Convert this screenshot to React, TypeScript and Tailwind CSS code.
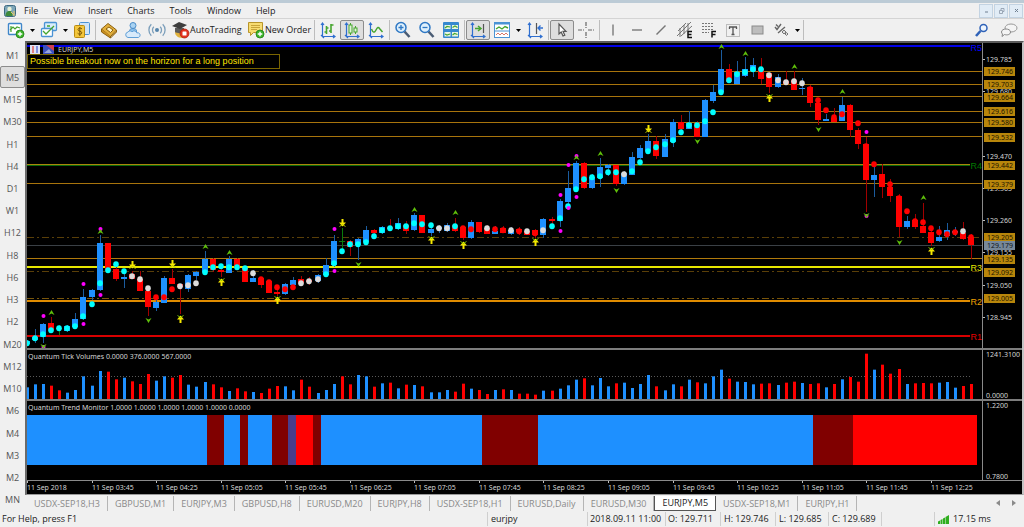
import React from 'react';

const BLUE = '#1e90ff';
const RED = '#ff0000';
const MAROON = '#800000';

// horizontal step between two bars
const STEP = 8.07;
const barX = (index: number) => Math.round(index * STEP);

const dotColors: Record<string, string> = { c: '#00ffff', w: '#dcdcdc', r: '#ff0000' };

type Candle = [color: 'b' | 'r' | 'g', top: number, bottom: number, high: number, low: number, dot: string, dotY: number];

const candles: Candle[] = [
  ['b', 341, 344, 340, 345, 'c', 343],
  ['b', 337, 340, 329, 343, 'c', 338],
  ['b', 324, 337, 323, 343, 'c', 334],
  ['r', 323, 330, 317, 331, 'c', 330],
  ['g', 328, 328, 325, 335, 'c', 328],
  ['b', 326, 331, 325, 332, 'c', 328],
  ['b', 319, 327, 313, 328, 'c', 326],
  ['b', 297, 319, 289, 320, 'c', 316],
  ['b', 290, 297, 289, 300, 'c', 304],
  ['b', 243, 290, 235, 291, 'c', 283],
  ['r', 243, 270, 243, 272, 'c', 270],
  ['r', 269, 279, 266, 281, 'c', 264],
  ['b', 277, 279, 273, 288, 'c', 271],
  ['r', 274, 279, 271, 279, 'w', 276],
  ['r', 279, 291, 271, 291, 'w', 279],
  ['r', 291, 307, 290, 316, 'w', 288],
  ['b', 302, 308, 300, 311, 'r', 297],
  ['b', 278, 303, 276, 303, 'r', 297],
  ['r', 278, 284, 269, 284, 'r', 289],
  ['r', 284, 287, 284, 314, 'w', 286],
  ['b', 275, 289, 274, 292, 'w', 285],
  ['b', 272, 276, 271, 280, 'w', 283],
  ['b', 259, 272, 251, 273, 'c', 272],
  ['r', 259, 270, 258, 272, 'c', 267],
  ['r', 270, 272, 268, 277, 'c', 266],
  ['b', 259, 273, 256, 273, 'c', 267],
  ['r', 259, 268, 258, 270, 'c', 267],
  ['r', 268, 282, 267, 282, 'c', 268],
  ['b', 278, 282, 270, 282, 'w', 273],
  ['r', 278, 285, 277, 288, 'r', 279],
  ['r', 281, 293, 280, 293, 'r', 282],
  ['r', 292, 294, 285, 296, 'r', 287],
  ['b', 284, 294, 283, 295, 'r', 289],
  ['b', 280, 285, 277, 286, 'r', 287],
  ['r', 279, 283, 276, 286, 'w', 283],
  ['r', 280, 282, 277, 285, 'w', 281],
  ['b', 275, 281, 274, 283, 'w', 279],
  ['b', 265, 275, 258, 276, 'c', 274],
  ['b', 241, 265, 235, 267, 'c', 263],
  ['g', 241, 241, 228, 252, 'c', 251],
  ['r', 241, 247, 240, 256, 'c', 244],
  ['b', 239, 245, 238, 260, 'c', 244],
  ['b', 230, 242, 226, 243, 'c', 242],
  ['r', 230, 233, 229, 237, 'c', 236],
  ['b', 227, 233, 226, 234, 'c', 230],
  ['r', 227, 229, 219, 230, 'c', 228],
  ['b', 223, 229, 218, 230, 'c', 226],
  ['r', 225, 231, 221, 234, 'c', 226],
  ['b', 215, 230, 213, 231, 'c', 223],
  ['r', 215, 233, 215, 233, 'c', 224],
  ['b', 229, 233, 227, 236, 'c', 225],
  ['b', 227, 229, 225, 233, 'w', 228],
  ['b', 225, 231, 223, 232, 'w', 228],
  ['r', 225, 231, 218, 232, 'c', 226],
  ['r', 227, 238, 226, 240, 'r', 228],
  ['b', 222, 238, 220, 239, 'r', 229],
  ['r', 222, 232, 222, 233, 'r', 225],
  ['r', 228, 234, 225, 234, 'w', 228],
  ['b', 231, 234, 226, 234, 'r', 229],
  ['r', 228, 233, 226, 233, 'r', 230],
  ['b', 230, 234, 227, 235, 'w', 230],
  ['r', 229, 232, 227, 235, 'r', 231],
  ['r', 231, 235, 229, 235, 'w', 231],
  ['r', 230, 235, 229, 238, 'r', 233],
  ['b', 219, 235, 218, 238, 'w', 230],
  ['r', 219, 221, 217, 226, 'c', 226],
  ['b', 201, 221, 199, 227, 'c', 218],
  ['b', 188, 202, 171, 206, 'c', 206],
  ['b', 163, 189, 161, 190, 'c', 189],
  ['r', 163, 188, 162, 189, 'c', 179],
  ['b', 177, 188, 174, 189, 'c', 177],
  ['b', 167, 178, 158, 187, 'c', 176],
  ['b', 165, 168, 164, 176, 'c', 172],
  ['r', 165, 184, 165, 186, 'c', 172],
  ['b', 173, 184, 171, 185, 'w', 174],
  ['b', 157, 175, 152, 175, 'c', 171],
  ['b', 148, 158, 145, 159, 'c', 162],
  ['b', 141, 151, 134, 152, 'c', 151],
  ['r', 141, 156, 136, 159, 'c', 147],
  ['b', 139, 157, 134, 157, 'c', 144],
  ['b', 122, 142, 119, 147, 'c', 140],
  ['r', 122, 129, 115, 130, 'c', 132],
  ['b', 123, 129, 111, 129, 'c', 125],
  ['r', 123, 137, 121, 137, 'c', 125],
  ['b', 100, 137, 99, 137, 'c', 121],
  ['b', 92, 101, 85, 103, 'c', 112],
  ['b', 69, 92, 50, 94, 'c', 92],
  ['r', 69, 82, 64, 82, 'c', 80],
  ['b', 72, 84, 61, 84, 'c', 74],
  ['b', 69, 76, 57, 77, 'c', 72],
  ['b', 65, 71, 58, 77, 'c', 69],
  ['r', 68, 79, 58, 84, 'c', 69],
  ['r', 73, 87, 72, 93, 'w', 75],
  ['b', 77, 87, 74, 88, 'w', 80],
  ['r', 81, 84, 71, 84, 'w', 82],
  ['r', 80, 90, 71, 90, 'w', 81],
  ['b', 88, 89, 78, 95, 'w', 83],
  ['r', 87, 103, 85, 107, 'r', 89],
  ['r', 103, 120, 101, 125, 'r', 100],
  ['b', 119, 121, 114, 121, 'r', 110],
  ['r', 118, 122, 108, 122, 'r', 117],
  ['b', 105, 121, 97, 121, 'r', 114],
  ['r', 105, 130, 104, 137, 'r', 112],
  ['r', 130, 144, 128, 149, 'r', 123],
  ['r', 144, 180, 137, 212, 'r', 146],
  ['b', 175, 180, 165, 197, 'r', 164],
  ['r', 174, 187, 164, 198, 'r', 177],
  ['r', 187, 196, 179, 202, 'r', 184],
  ['r', 196, 227, 194, 237, 'r', 198],
  ['b', 221, 227, 216, 229, 'r', 211],
  ['r', 220, 227, 214, 229, 'r', 221],
  ['r', 226, 233, 203, 233, 'r', 222],
  ['r', 232, 243, 231, 246, 'r', 228],
  ['b', 237, 241, 226, 242, 'r', 232],
  ['b', 230, 236, 223, 240, 'r', 234],
  ['b', 231, 233, 227, 236, 'r', 232],
  ['r', 233, 239, 222, 240, 'w', 231],
  ['r', 237, 245, 234, 259, 'r', 237],
];

const fractalsUp = [[3, 313], [9, 232], [22, 247], [25, 253], [48, 210], [53, 213], [68, 158], [71, 154], [86, 47], [89, 54], [95, 67], [101, 92], [111, 198]];
const fractalsDown = [[2, 346], [15, 320], [41, 264], [73, 190], [83, 141], [98, 129], [104, 215], [108, 242]];
const arrowsUp = [[19, 319], [24, 282], [31, 300], [50, 240], [54, 245], [63, 242], [92, 98], [112, 251]];
const arrowsDown = [[13, 265], [18, 264], [39, 223], [77, 129]];
const magentaDots = [[2, 316], [2, 347], [7, 284], [7, 324], [9, 229], [9, 295], [38, 229], [38, 271], [66, 195], [66, 231], [67, 165], [67, 208], [68, 156], [68, 197], [104, 132], [104, 216]];

const levels = [
  { y: 71, color: '#a8740c', width: 1 },
  { y: 84, color: '#a8740c', width: 1 },
  { y: 96, color: '#a8740c', width: 1 },
  { y: 111, color: '#a8740c', width: 1 },
  { y: 122, color: '#a8740c', width: 1 },
  { y: 136, color: '#a8740c', width: 1 },
  { y: 165, color: '#0a6a0a', width: 1 },
  { y: 164, color: '#a8860c', width: 1 },
  { y: 183, color: '#a8740c', width: 1 },
  { y: 258, color: '#b07a0c', width: 1 },
  { y: 245, color: '#3a4046', width: 1 },
  { y: 237, color: '#5a3f08', width: 1, dash: '7 3 2 3' },
  { y: 271, color: '#5a3f08', width: 1, dash: '7 3 2 3' },
  { y: 298, color: '#7a560a', width: 1, dash: '7 3 2 3' },
  { y: 267, color: '#e6e600', width: 2 },
  { y: 301, color: '#e08c00', width: 2 },
  { y: 336, color: '#d80000', width: 2 },
  { y: 46, color: '#0000e6', width: 2 },
];

const pivots = [
  { name: 'R5', y: 47, color: '#0000ff' },
  { name: 'R4', y: 165, color: '#007800' },
  { name: 'R3', y: 267, color: '#e6e600' },
  { name: 'R2', y: 301, color: '#f0a000' },
  { name: 'R1', y: 336, color: '#e60000' },
];

const scale = [
  ['129.785', 59], ['129.680', 91], ['129.470', 156], ['129.365', 188],
  ['129.260', 220], ['129.155', 252], ['129.050', 285], ['128.945', 317],
] as const;

const priceTags = [
  ['129.746', 71], ['129.703', 84], ['129.664', 97], ['129.616', 111], ['129.580', 122], ['129.532', 137],
  ['129.442', 165], ['129.379', 184], ['129.205', 237], ['129.135', 259], ['129.092', 272], ['129.005', 298],
] as const;

// bar heights in thirds of a pixel, with one letter of colour for each bar
const volumeHeights = [
  35, 44, 45, 40, 26, 19, 27, 68, 40, 84, 82, 59, 64, 53, 45, 75, 55, 68, 64, 72, 43, 37, 51, 44, 35, 24, 32, 23, 21, 18,
  31, 39, 38, 26, 58, 37, 18, 27, 45, 68, 44, 72, 68, 37, 47, 49, 32, 43, 42, 38, 20, 20, 27, 22, 46, 31, 27, 15, 27, 29,
  27, 16, 16, 13, 25, 25, 31, 41, 58, 62, 41, 63, 38, 47, 49, 33, 45, 72, 38, 26, 44, 38, 58, 50, 47, 68, 88, 61, 52, 51,
  44, 46, 47, 42, 49, 52, 48, 45, 47, 35, 45, 59, 66, 52, 136, 88, 103, 76, 90, 45, 47, 48, 47, 49, 51, 34, 39, 45,
];
const volumeColors =
  'bbbrrbbbbbrrbrrrbbrrbbbrrbrrbrrrbbrrbbbrrbbrbrbrbrbbbrrbrrbrbrrrbrbbbrbbbrbbbbrbbrbrbbbrbbbrrbrrbrrbrbrrrbrrrbrrrbbbrr';

const trend = [
  [0, 180, BLUE], [180, 197, MAROON], [197, 213, BLUE], [213, 221, MAROON], [221, 245, BLUE], [245, 261, MAROON],
  [261, 269, '#483d8b'], [269, 286, RED], [286, 294, MAROON], [294, 455, BLUE], [455, 511, MAROON], [511, 786, BLUE],
  [786, 826, MAROON], [826, 950, RED],
] as const;

const times = [
  '11 Sep 2018', '11 Sep 03:45', '11 Sep 04:25', '11 Sep 05:05', '11 Sep 05:45', '11 Sep 06:25', '11 Sep 07:05', '11 Sep 07:45',
  '11 Sep 08:25', '11 Sep 09:05', '11 Sep 09:45', '11 Sep 10:25', '11 Sep 11:05', '11 Sep 11:45', '11 Sep 12:25',
];

const timeframes = [
  'M1', 'M5', 'M15', 'M30', 'H1', 'H4', 'D1', 'W1', 'H12', 'H8', 'H6', 'H3', 'H2', 'M20', 'M12', 'M10', 'M6', 'M4', 'M3', 'M2', 'MN',
];

const tabs = [
  'USDX-SEP18,H3', 'GBPUSD,M1', 'EURJPY,M3', 'GBPUSD,H8', 'EURUSD,M20', 'EURJPY,H8', 'USDX-SEP18,H1', 'EURUSD,Daily',
  'EURUSD,M30', 'EURJPY,M5', 'USDX-SEP18,M1', 'EURJPY,H1',
];

const Icon = ({ children }: { children: React.ReactNode }) => (
  <svg width="18" height="18" viewBox="0 0 18 18" fill="none" className="shrink-0">
    {children}
  </svg>
);

const Axes = () => (
  <path d="M3.5 2v13.5H16M2 4l1.5-2L5 4M2 14l3 3M14 14l2 1.5-2 1.5" stroke="#2f6fd0" strokeWidth="1.2" />
);

const Plus = () => (
  <>
    <circle cx="13" cy="13" r="4" fill="#3cb52a" stroke="#1f7d14" strokeWidth="0.8" />
    <path d="M13 10.7v4.6M10.7 13h4.6" stroke="#fff" strokeWidth="1.4" />
  </>
);

const ToolButton = ({ label, active, children }: { label: string; active?: boolean; children: React.ReactNode }) => (
  <button
    aria-label={label}
    className={`flex h-5 w-6 shrink-0 items-center justify-center rounded-xs border ${
      active ? 'border-[#8c8c8c] bg-[#dedede]' : 'border-transparent'
    }`}
  >
    <Icon>{children}</Icon>
  </button>
);

const Caret = () => (
  <button aria-label="More" className="flex h-5 w-[9px] shrink-0 items-center justify-center">
    <svg width="5" height="3" viewBox="0 0 5 3"><path d="M0 0h5L2.5 3z" fill="#000" /></svg>
  </button>
);

const Divider = () => <span className="mx-px h-5 w-px shrink-0 bg-[#bdbdbd]" />;

const Menu = () => (
  <header className="flex h-[15px] items-center bg-[#f0f0f0] pl-1">
    <svg width="12" height="12" viewBox="0 0 12 12" className="mr-2">
      <rect x="0.5" y="0.5" width="11" height="11" rx="2" fill="#7ea6b8" stroke="#3c6a80" />
      <circle cx="5.5" cy="4" r="2.2" fill="#e8f2d8" />
      <path d="M1.5 11c0-4 2-5 4-5s3 1 3 5z" fill="#3f8a3a" />
      <path d="M7 7l3 3M10 6v5" stroke="#e9c96a" />
    </svg>
    <nav className="flex gap-[15px] text-[9px] text-[#222]">
      {['File', 'View', 'Insert', 'Charts', 'Tools', 'Window', 'Help'].map((item) => (
        <button key={item}>{item}</button>
      ))}
    </nav>
    <div className="ml-auto flex gap-px pr-px">
      <button aria-label="Minimize" className="flex h-[14px] w-[14px] items-center justify-center border border-[#c3d3e2] bg-[#e1ecf6]">
        <svg width="7" height="7"><path d="M2 5h3" stroke="#6f7f90" /></svg>
      </button>
      <button aria-label="Restore" className="flex h-[14px] w-[14px] items-center justify-center border border-[#c3d3e2] bg-[#e1ecf6]">
        <svg width="7" height="7" fill="none"><path d="M1.5 3.5h3v3h-3zM3 3V1.5h3v3H5" stroke="#8a98a8" strokeWidth="0.8" /></svg>
      </button>
      <button aria-label="Close" className="flex h-[14px] w-[14px] items-center justify-center border border-[#c3d3e2] bg-[#e1ecf6]">
        <svg width="7" height="7"><path d="M2 2l3 3M5 2L2 5" stroke="#6f7f90" /></svg>
      </button>
    </div>
  </header>
);

const Toolbar = () => (
  <div className="flex h-[23px] items-center border-t border-[#d4d4d4] bg-[#f0f0f0] pl-1 text-[9px] text-[#222]">
    <ToolButton label="New Chart">
      <rect x="1.5" y="2.5" width="13" height="11" rx="1" fill="#fff" stroke="#3f86c9" strokeWidth="1.4" />
      <path d="M4 11V5M3 9l3-3 2 2 2-2 3 1" stroke="#46a52f" strokeWidth="1.2" />
      <Plus />
    </ToolButton>
    <Caret />
    <ToolButton label="Profiles">
      <rect x="4.5" y="1.5" width="12" height="8" rx="1" fill="#d9ecfa" stroke="#4a93d4" strokeWidth="1.3" />
      <rect x="1.5" y="7.5" width="11" height="8" rx="1" fill="#fff" stroke="#4a93d4" strokeWidth="1.3" />
      <path d="M3 10l3 3 6-6 2-2M7 5h3" stroke="#46a52f" strokeWidth="1.3" />
    </ToolButton>
    <Caret />
    <ToolButton label="Market Watch">
      <rect x="6.5" y="1.5" width="10" height="12" rx="1" fill="#cfe4f7" stroke="#4a93d4" />
      <rect x="1.5" y="4.5" width="10" height="12" rx="1" fill="#f3c63c" stroke="#b98a12" />
      <path d="M9 8c-1-1.5-4-1.200-4 .6 0 2 3.800 1.200 3.800 3.200 0 1.700-3 2-4.200.4M6.800 6v9" stroke="#7b5605" />
    </ToolButton>
    <Divider />
    <ToolButton label="Data Window">
      <path d="M1.5 8L8 2.5 16.5 9l-6 6.5z" fill="#e2ae3a" stroke="#8b6110" />
      <path d="M1.5 8v3l9 6v-2M10.5 17l6-6V9" fill="#c98f20" stroke="#8b6110" />
      <path d="M6 8l3-2 4 3-2.5 2.5z" fill="#fff3c4" stroke="#8b6110" />
    </ToolButton>
    <ToolButton label="Cloud">
      <circle cx="9" cy="4.5" r="3" fill="#a8d2f2" stroke="#4a8cc8" />
      <path d="M5.500 12V9.500c0-2.500 7-2.500 7 0V12z" fill="#8fc4ee" stroke="#4a8cc8" />
      <path d="M4 16.5a2.800 2.800 0 010-5.500c1-1.500 3-1.500 4-.2 1.500-1.600 4.500-1 4.800 1 2.500-.4 3.700 1.500 3.200 3-.3 1-1 1.700-2 1.700z" fill="#d8eafa" stroke="#5e9ed6" />
    </ToolButton>
    <ToolButton label="Signals">
      <circle cx="9" cy="9" r="2" fill="#5585ac" />
      <path d="M5.800 12.200a4.500 4.500 0 010-6.400M12.200 5.800a4.500 4.500 0 010 6.400M3.300 14.700a8 8 0 010-11.400M14.700 3.300a8 8 0 010 11.400" stroke="#7c9fbb" strokeWidth="1.3" />
    </ToolButton>
    <button className="flex w-[75px] shrink-0 items-center pl-[3px] whitespace-nowrap">
      <Icon>
        <path d="M3 11c0 5 5 6 8 6l1-7z" fill="#e0b23c" />
        <path d="M3 7v4c2 1.5 7 1.5 9 0V7z" fill="#5b5b5b" />
        <path d="M0 5l7-4 8 3-7 4z" fill="#3e3e3e" />
        <circle cx="12.5" cy="12.5" r="4.5" fill="#e2311d" stroke="#a81c0c" strokeWidth="0.7" />
        <rect x="10.5" y="10.5" width="4" height="4" rx="0.5" fill="#fff" />
      </Icon>
      AutoTrading
    </button>
    <button className="flex w-[69px] shrink-0 items-center pl-[3px] whitespace-nowrap">
      <Icon>
        <path d="M1.5 1.5h14v10h-9l-3 3v-3h-2z" fill="#f7dc72" stroke="#b8952a" />
        <path d="M4 4.5h9M4 6.5h9M4 8.5h6" stroke="#c9a53a" />
        <Plus />
      </Icon>
      New Order
    </button>
    <Divider />
    <ToolButton label="Bar Chart">
      <Axes />
      <path d="M7.500 5v8M5.500 11h2M7.500 7h2M12 3v9M12 4h2.500M10 10h2" stroke="#46a52f" strokeWidth="1.6" />
    </ToolButton>
    <ToolButton label="Candlesticks" active>
      <Axes />
      <path d="M7.500 2v12M12.500 5v8" stroke="#46a52f" />
      <rect x="6" y="4" width="3" height="8" fill="#dff5d8" stroke="#46a52f" />
      <rect x="11" y="7" width="3" height="4" fill="#dff5d8" stroke="#46a52f" />
    </ToolButton>
    <ToolButton label="Line Chart">
      <Axes />
      <path d="M4.500 8c1.500 4 3 4 4.500 1s2.500-3 3.500-1.500L15.500 11" stroke="#46a52f" strokeWidth="1.5" />
    </ToolButton>
    <Divider />
    <ToolButton label="Zoom In">
      <path d="M10.5 10.5l5 5.5" stroke="#4a5c74" strokeWidth="2.6" />
      <circle cx="7" cy="6.5" r="5" fill="#dff0fc" stroke="#2f78c4" strokeWidth="1.5" />
      <path d="M7 4v5M4.500 6.500h5" stroke="#2f78c4" strokeWidth="1.3" />
    </ToolButton>
    <ToolButton label="Zoom Out">
      <path d="M10.5 10.5l5 5.5" stroke="#4a5c74" strokeWidth="2.6" />
      <circle cx="7" cy="6.5" r="5" fill="#dff0fc" stroke="#2f78c4" strokeWidth="1.5" />
      <path d="M4.500 6.500h5" stroke="#2f78c4" strokeWidth="1.3" />
    </ToolButton>
    <ToolButton label="Tile Windows">
      <rect x="1" y="1" width="16" height="16" rx="1" fill="#3588cf" />
      <path d="M2.500 4h6v4h-6zM10 4h6v4h-6zM2.500 11h6v4.500h-6zM10 11h6v4.500h-6z" fill="#e8f6e2" />
      <path d="M3 7l2-1.500 3 .5M10.500 6.500L13 5l2.500 1.500M3 13l2 1 3-1M10.500 14l2-1.500 3 1" stroke="#46a52f" strokeWidth="1.2" />
    </ToolButton>
    <Divider />
    <ToolButton label="Chart Shift" active>
      <Axes />
      <path d="M14.500 3v9" stroke="#555" strokeWidth="1.2" />
      <path d="M6 7.500h5M9 5l3 2.500L9 10" stroke="#46a52f" strokeWidth="1.5" />
    </ToolButton>
    <ToolButton label="Indicators">
      <rect x="1.5" y="1.5" width="15" height="15" fill="#fff" stroke="#4a93d4" />
      <path d="M1 2.500h16" stroke="#4a93d4" strokeWidth="2" />
      <path d="M3 8l3-2 3 2 3-2.500 3 1.500" stroke="#46a52f" strokeWidth="1.4" />
      <path d="M2 10h14" stroke="#4a93d4" />
      <path d="M3 14l2-2 2 2 2-2 2 2 2-2 2 2" stroke="#d8786a" />
    </ToolButton>
    <Caret />
    <ToolButton label="Auto Scroll">
      <Axes />
      <path d="M10.500 2v11" stroke="#555" strokeWidth="1.2" />
      <path d="M12 7h5M14.500 4.500L12 7l2.500 2.500" stroke="#2f6fd0" strokeWidth="1.4" />
    </ToolButton>
    <Divider />
    <ToolButton label="Cursor" active>
      <path d="M6 3v10l2.200-2 1.800 4 1.800-.8L10 10.300h3z" fill="#fff" stroke="#555" strokeWidth="1.2" />
    </ToolButton>
    <ToolButton label="Crosshair">
      <path d="M9 1v6M9 11v6M1 9h6M11 9h6" stroke="#666" strokeWidth="1.2" strokeDasharray="4 1" />
    </ToolButton>
    <Divider />
    <ToolButton label="Vertical Line"><path d="M9 3.500v11" stroke="#666" strokeWidth="1.2" /></ToolButton>
    <ToolButton label="Horizontal Line"><path d="M4 9h10" stroke="#666" strokeWidth="1.2" /></ToolButton>
    <ToolButton label="Trendline"><path d="M4.500 13.500l9-9" stroke="#777" strokeWidth="1.4" /></ToolButton>
    <ToolButton label="Equidistant Channel">
      <path d="M1 15L15 1M2 10l8-8M5 15L16 5M4 7v9M8 4v9M12 2v8" stroke="#777" />
      <path d="M16 10.500h-4v6h4M12 13.500h3.500" stroke="#111" strokeWidth="1.5" />
    </ToolButton>
    <ToolButton label="Fibonacci">
      <path d="M2 2.500h12M2 5.500h12M2 8.500h12M2 11.500h7" stroke="#777" strokeDasharray="2 1" />
      <path d="M16 10.500h-4v6M12 13.500h3.500" stroke="#111" strokeWidth="1.5" />
    </ToolButton>
    <ToolButton label="Text">
      <rect x="2.5" y="3.5" width="13" height="12" stroke="#888" strokeDasharray="1 1" />
      <path d="M5 6h8M9 6v8M7.500 13.500h3M5.500 6v2M12.500 6v2" stroke="#555" strokeWidth="1.3" />
    </ToolButton>
    <ToolButton label="Rectangle"><rect x="4" y="5" width="11" height="8" fill="#bdbdbd" stroke="#8a8a8a" /></ToolButton>
    <ToolButton label="Arrows">
      <path d="M3 6l2 2.500L9 3M6 12L13 6M4 3.500L6 5.500" stroke="#666" strokeWidth="1.4" />
      <path d="M10 11l2-2 2 2-2 2zM13 13l1.500-1.500L16 13l-1.500 1.500z" fill="#ddd" stroke="#777" />
    </ToolButton>
    <Caret />
    <Divider />
    <div className="ml-auto flex gap-[3px] pr-[3px]">
      <ToolButton label="Search">
        <path d="M3 15l4.500-5" stroke="#2f62b8" strokeWidth="2.6" />
        <circle cx="10.5" cy="7" r="3.5" fill="#eef5fd" stroke="#2f62b8" strokeWidth="1.5" />
      </ToolButton>
      <ToolButton label="Chat">
        <ellipse cx="11" cy="7" rx="6" ry="4" fill="#f4f4f4" stroke="#999" />
        <path d="M1.500 11c0-4 9-4 9 0 0 3-4 3.300-6 2.500L2 15.500l.5-2.500c-.6-.5-1-1.200-1-2z" fill="#f4f4f4" stroke="#888" />
      </ToolButton>
    </div>
  </div>
);

const PricePanel = () => (
  <section className="flex min-h-[307px] flex-1 border-b-2 border-[#7d7d7d]">
    <div className="relative min-w-0 flex-1">
      <svg className="h-full w-full" role="img" aria-label="EURJPY M5 price chart">
        <g transform="translate(0 -43)">
          {levels.map((l) => (
            <line
              key={l.y}
              x1="0"
              x2="100%"
              y1={l.width === 2 ? l.y : l.y + 0.5}
              y2={l.width === 2 ? l.y : l.y + 0.5}
              stroke={l.color}
              strokeWidth={l.width}
              strokeDasharray={l.dash}
            />
          ))}
          {candles.map(([color, top, bottom, high, low], i) => {
            const stroke = color === 'b' ? '#1b5c9e' : color === 'r' ? '#a00000' : '#0a7a0a';
            const fill = color === 'b' ? BLUE : color === 'r' ? RED : '#0a7a0a';
            return (
              <g key={i}>
                <line x1={barX(i) + 0.5} x2={barX(i) + 0.5} y1={high} y2={low} stroke={stroke} />
                <rect x={barX(i) - 3} y={top} width="6" height={Math.max(bottom - top, 1)} fill={fill} />
              </g>
            );
          })}
          {candles.map(([, , , , , dot, y], i) => (
            <ellipse key={i} cx={barX(i)} cy={y + 0.3} rx="2.8" ry="3" fill={dotColors[dot]} />
          ))}
          {magentaDots.map(([i, y]) => (
            <circle key={`${i}-${y}`} cx={barX(i) + 0.5} cy={y} r="2" fill="#ff00ff" />
          ))}
          {fractalsUp.map(([i, y]) => (
            <path key={i} d="M0-3L3 2 0 .5-3 2z" fill="#5fbf0a" transform={`translate(${barX(i) + 0.5} ${y})`} />
          ))}
          {fractalsDown.map(([i, y]) => (
            <path key={i} d="M0 3L3-2 0-.5-3-2z" fill="#5fbf0a" transform={`translate(${barX(i) + 0.5} ${y})`} />
          ))}
          {arrowsUp.map(([i, y]) => (
            <g key={i} transform={`translate(${barX(i) + 0.5} ${y})`}>
              <path d="M0-3.500L3.500.5H1V4H-1V.5H-3.500z" fill="#f5e800" />
              <path d="M-3-3.500L0-1.500 3-3.500" stroke="#7fc400" fill="none" />
            </g>
          ))}
          {arrowsDown.map(([i, y]) => (
            <g key={i} transform={`translate(${barX(i) + 0.5} ${y})`}>
              <path d="M0 3.500L3.500-.5H1V-4H-1V-.5H-3.500z" fill="#f5e800" />
              <path d="M-3 3.500L0 1.500 3 3.500" stroke="#b8c400" fill="none" />
            </g>
          ))}
          {pivots.map((p) => (
            <g key={p.name}>
              {/* the line stops short of its label */}
              <rect x="100%" y={p.y - 3} width="12" height="6" fill="#000" transform="translate(-12 0)" />
              <text x="100%" y={p.y + 4} textAnchor="end" fill={p.color} className="font-['Liberation_Sans'] text-[9px]">
                {p.name}
              </text>
            </g>
          ))}
        </g>
      </svg>
      {/* chart caption and note box */}
      <div className="absolute top-[2px] left-0 font-['Liberation_Sans']">
        <div className="flex h-[9px] items-center gap-1 pl-[3px] font-['Noto_Sans'] text-[7px] leading-none text-[#d0d0d0]">
          <svg width="24" height="9" viewBox="0 0 24 9">
            <rect width="10" height="9" fill="#dfe3f5" />
            <path d="M3 1v7" stroke="#e08080" strokeWidth="2" />
            <path d="M7 1v7" stroke="#8090e0" strokeWidth="2" />
            <rect x="13" width="11" height="9" fill="#3a4fc0" />
            <path d="M16 0h8v6l-4-3z" fill="#d04050" />
            <path d="M14 8l5-4 3 4z" fill="#99a6d8" />
          </svg>
          EURJPY,M5
        </div>
        <div className="h-[15px] w-[253px] border border-[#7a6500] bg-black pl-[2px] text-[9px] leading-[13px] whitespace-nowrap text-[#ffe600]">
          Possible breakout now on the horizon for a long position
        </div>
      </div>
    </div>
    <svg className="h-full w-10 shrink-0 border-l border-[#8a8a8a] font-['Noto_Sans'] text-[7px]">
      <g transform="translate(0 -43)">
        {scale.map(([label, y]) => (
          <g key={label}>
            <path d={`M0 ${y + 0.5}h2`} stroke="#bdbdbd" />
            <text x="3" y={y + 3} fill="#d4d4d4">{label}</text>
          </g>
        ))}
        {priceTags.map(([label, y]) => (
          <g key={label}>
            <rect x="1" y={y - 4} width="31" height="9" fill="#b8860b" />
            <text x="4" y={y + 3} fill="#1c1400">{label}</text>
          </g>
        ))}
        <rect x="1" y="241" width="31" height="9" fill="#778899" />
        <text x="4" y="248" fill="#10151a">129.179</text>
      </g>
    </svg>
  </section>
);

const VolumePanel = () => (
  <section className="flex h-[51px] shrink-0 border-b-2 border-[#7d7d7d]">
    <svg className="h-full min-w-0 flex-1 font-['Noto_Sans'] text-[7px]" role="img" aria-label="Quantum Tick Volumes">
      <path d="M0 26.500H943" stroke="#5a5a5a" strokeDasharray="1 2" />
      {volumeHeights.map((h, i) => (
        <rect key={i} x={barX(i) - 1} y={49 - h / 3} width="3" height={h / 3} fill={volumeColors[i] === 'b' ? BLUE : RED} />
      ))}
      <text x="1" y="9" fill="#d4d4d4">Quantum Tick Volumes 0.0000 376.0000 567.0000</text>
    </svg>
    <svg className="h-full w-10 shrink-0 border-l border-[#8a8a8a] font-['Noto_Sans'] text-[7px]">
      <text x="3" y="7" fill="#d4d4d4">1241.3100</text>
      <text x="3" y="48" fill="#d4d4d4">0.0000</text>
    </svg>
  </section>
);

const TrendPanel = () => (
  <section className="flex h-20 shrink-0 border-b border-[#8a8a8a]">
    <svg className="h-full min-w-0 flex-1 font-['Noto_Sans'] text-[7px]" role="img" aria-label="Quantum Trend Monitor">
      {trend.map(([from, to, color]) => (
        <rect key={from} x={from} y="14" width={to - from} height="50" fill={color} />
      ))}
      <text x="1" y="9" fill="#d4d4d4">Quantum Trend Monitor 1.0000 1.0000 1.0000 1.0000 1.0000 0.0000</text>
    </svg>
    <svg className="h-full w-10 shrink-0 border-l border-[#8a8a8a] font-['Noto_Sans'] text-[7px]">
      <text x="3" y="7" fill="#d4d4d4">1.2200</text>
      <text x="3" y="78" fill="#d4d4d4">0.7800</text>
    </svg>
  </section>
);

const TimeAxis = () => (
  <svg className="h-[13px] w-full shrink-0 font-['Noto_Sans'] text-[7px]">
    {times.map((time, i) => (
      <g key={time}>
        <path d={`M${barX(i * 8) + 0.5} 0v2`} stroke="#bdbdbd" />
        <text x={barX(i * 8)} y="9" fill="#d4d4d4">{time}</text>
      </g>
    ))}
  </svg>
);

const StatusBar = () => (
  <footer className="flex h-4 shrink-0 items-center bg-[#f0f0f0] text-[9px] whitespace-nowrap text-[#222]">
    <span className="flex-1 pl-[2px]">For Help, press F1</span>
    <span className="w-[100px] border-l border-[#cfcfcf] pl-[3px]">eurjpy</span>
    <span className="w-[78px] border-l border-[#cfcfcf] pl-[2px]">2018.09.11 11:00</span>
    <span className="w-[55px] border-l border-[#cfcfcf] pl-[2px]">O: 129.711</span>
    <span className="w-[55px] border-l border-[#cfcfcf] pl-[3px]">H: 129.746</span>
    <span className="w-[53px] border-l border-[#cfcfcf] pl-[3px]">L: 129.685</span>
    <span className="w-[53px] border-l border-[#cfcfcf] pl-[3px]">C: 129.689</span>
    <span className="w-[53px] border-l border-[#cfcfcf]">&nbsp;</span>
    <span className="flex w-[90px] items-center gap-1 border-l border-[#cfcfcf] pl-[3px]">
      <svg width="11" height="9" viewBox="0 0 11 9" fill="#2fae1f">
        <path d="M0 6.500l2-1V9H0zM2.500 5l2-1v5h-2zM5 3.500l2-1V9H5zM7.500 2L11 0v9H7.500z" />
      </svg>
      17.15 ms
    </span>
  </footer>
);

const App = () => {
  return (
    <div className="flex min-h-screen flex-col overflow-hidden bg-[#f0f0f0] font-['Open_Sans',sans-serif]">
      <div className="h-[3px] bg-[#bccbd6]" />
      <Menu />
      <Toolbar />
      <main className="flex flex-1">
        <nav aria-label="Timeframes" className="flex w-[25px] shrink-0 flex-col pt-[3px] text-[9px] text-[#555]">
          {timeframes.map((tf) => (
            <button
              key={tf}
              className={`flex flex-1 items-center justify-center border leading-none ${
                tf === 'M5' ? 'rounded-xs border-[#8c8c8c] bg-[#dedede]' : 'border-transparent'
              }`}
            >
              {tf}
            </button>
          ))}
        </nav>
        <div className="flex min-w-0 flex-1 flex-col">
          <div className="flex flex-1 flex-col border-t-2 border-r-2 border-b border-l-2 border-t-[#5a5a5a] border-r-[#c4c4c4] border-b-[#9a9a9a] border-l-[#6a6a6a] bg-black">
            <PricePanel />
            <VolumePanel />
            <TrendPanel />
            <TimeAxis />
          </div>
          <div className="flex h-4 shrink-0 items-center pl-[2px] text-[9px] whitespace-nowrap text-[#8a8a8a]">
            {tabs.map((tab) => (
              <button
                key={tab}
                className={`h-[15px] border-r px-[7px] leading-none ${
                  tab === 'EURJPY,M5' ? 'border-b border-l border-[#555] bg-white text-[#222]' : 'border-[#b5b5b5]'
                }`}
              >
                {tab}
              </button>
            ))}
            <div className="ml-auto flex gap-3 pr-2">
              <button aria-label="Scroll left"><svg width="4" height="6"><path d="M4 0v6L0 3z" fill="#8a8a8a" /></svg></button>
              <button aria-label="Scroll right"><svg width="4" height="6"><path d="M0 0v6l4-3z" fill="#8a8a8a" /></svg></button>
            </div>
          </div>
        </div>
      </main>
      <StatusBar />
    </div>
  );
};

export default App;
